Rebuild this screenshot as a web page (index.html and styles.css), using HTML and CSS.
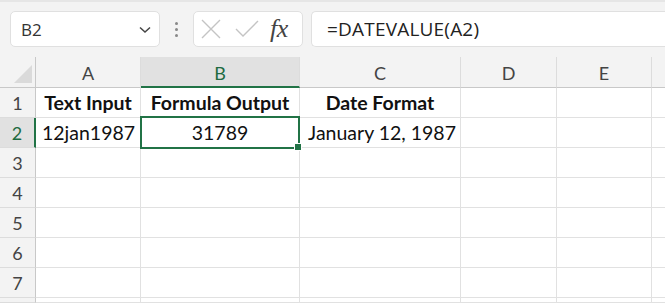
FILE: index.html
```html
<!DOCTYPE html>
<html lang="en">
<head>
  <meta charset="UTF-8">
  <title>DATEVALUE</title>
  <link rel="stylesheet" href="styles.css">
</head>
<body>
  <div class="toolbar">
    <div class="name-box">
      <span>B2</span>
      <svg class="chevron" width="12" height="8" viewBox="0 0 12 8"><path d="M1 1.5 L6 6 L11 1.5" fill="none" stroke="#444" stroke-width="1.5"/></svg>
    </div>
    <div class="dots"><i></i><i></i><i></i></div>
    <div class="fx-box">
      <svg width="22" height="22" viewBox="0 0 22 22"><path d="M2 2 L20 20 M20 2 L2 20" stroke="#c4c4c4" stroke-width="1.4" fill="none"/></svg>
      <svg width="24" height="22" viewBox="0 0 24 22"><path d="M1 11 L8 18 L23 3" stroke="#c4c4c4" stroke-width="1.4" fill="none"/></svg>
      <span class="fx">fx</span>
    </div>
    <div class="formula">=DATEVALUE(A2)</div>
  </div>

  <div class="sheet">
    <div class="hdr corner"><span class="tri"></span></div>
    <div class="hdr">A</div>
    <div class="hdr sel-col">B</div>
    <div class="hdr">C</div>
    <div class="hdr">D</div>
    <div class="hdr">E</div>
    <div class="hdr last"></div>

    <div class="rh">1</div>
    <div class="cell bold center">Text Input</div>
    <div class="cell bold center">Formula Output</div>
    <div class="cell bold center">Date Format</div>
    <div class="cell"></div><div class="cell"></div><div class="cell last"></div>

    <div class="rh sel-row">2</div>
    <div class="cell left">12jan1987</div>
    <div class="cell center active">31789<span class="handle"></span></div>
    <div class="cell right">January 12, 1987</div>
    <div class="cell"></div><div class="cell"></div><div class="cell last"></div>

    <div class="rh">3</div>
    <div class="cell"></div><div class="cell"></div><div class="cell"></div><div class="cell"></div><div class="cell"></div><div class="cell last"></div>
    <div class="rh">4</div>
    <div class="cell"></div><div class="cell"></div><div class="cell"></div><div class="cell"></div><div class="cell"></div><div class="cell last"></div>
    <div class="rh">5</div>
    <div class="cell"></div><div class="cell"></div><div class="cell"></div><div class="cell"></div><div class="cell"></div><div class="cell last"></div>
    <div class="rh">6</div>
    <div class="cell"></div><div class="cell"></div><div class="cell"></div><div class="cell"></div><div class="cell"></div><div class="cell last"></div>
    <div class="rh">7</div>
    <div class="cell"></div><div class="cell"></div><div class="cell"></div><div class="cell"></div><div class="cell"></div><div class="cell last"></div>
    <div class="rh"></div>
    <div class="cell"></div><div class="cell"></div><div class="cell"></div><div class="cell"></div><div class="cell"></div><div class="cell last"></div>
  </div>
</body>
</html>
```

FILE: styles.css
```css
* {
  box-sizing: border-box;
}

body {
  margin: 0;
  width: 665px;
  height: 303px;
  overflow: hidden;
  background: #f3f3f3;
  font-family: Lato, "Open Sans", sans-serif;
  color: #222;
  border-top: 2px solid #e6e6e6;
}

.toolbar {
  display: flex;
  align-items: center;
  height: 55px;
  padding: 8px 0 9px 10px;
}

.name-box {
  width: 150px;
  height: 36px;
  background: #fff;
  border: 1px solid #e0e0e0;
  border-radius: 5px;
  display: flex;
  align-items: center;
  justify-content: space-between;
  padding: 0 8px 0 10px;
  font-family: "Open Sans", sans-serif;
  font-size: 17px;
  color: #333;
}

.chevron {
  margin-top: 1px;
}

.dots {
  width: 33px;
  display: flex;
  flex-direction: column;
  align-items: center;
  gap: 3px;
}

.dots i {
  width: 3px;
  height: 3px;
  border-radius: 50%;
  background: #888;
}

.fx-box {
  width: 110px;
  height: 36px;
  background: #fff;
  border: 1px solid #e0e0e0;
  border-radius: 5px;
  display: flex;
  align-items: center;
  gap: 13px;
  padding-left: 6px;
}

.fx {
  font-family: "Liberation Serif", serif;
  font-style: italic;
  font-size: 26px;
  color: #444;
  margin-left: -2px;
  letter-spacing: -0.5px;
}

.formula {
  flex: 1;
  height: 36px;
  margin-left: 8px;
  background: #fff;
  border: 1px solid #e0e0e0;
  border-right: none;
  border-radius: 5px 0 0 5px;
  display: flex;
  align-items: center;
  padding-left: 15px;
  font-family: "Open Sans", sans-serif;
  font-size: 19px;
  letter-spacing: 0.2px;
  color: #222;
}

.sheet {
  display: grid;
  grid-template-columns: 36px 105px 159px 161px 96px 95px 1fr;
  grid-template-rows: 31px repeat(7, 30px) 5px;
  background: #fff;
}

.hdr {
  background: #f3f3f3;
  border-bottom: 1px solid #c8c8c8;
  border-right: 1px solid #dcdcdc;
  display: flex;
  align-items: center;
  justify-content: center;
  font-size: 18px;
  color: #444;
  padding-top: 2px;
}

.hdr.last {
  border-right: none;
}

.corner {
  position: relative;
  border-right: 1px solid #c8c8c8;
}

.tri {
  position: absolute;
  right: 3px;
  bottom: 4px;
  width: 0;
  height: 0;
  border-left: 18px solid transparent;
  border-bottom: 18px solid #dadada;
}

.sel-col {
  background: #e1e1e1;
  color: #1e6b41;
  border-bottom: 2px solid #217346;
}

.rh {
  background: #f3f3f3;
  border-right: 1px solid #c8c8c8;
  border-bottom: 1px solid #dcdcdc;
  display: flex;
  align-items: center;
  justify-content: center;
  font-size: 18px;
  color: #444;
}

.sel-row {
  background: #e1e1e1;
  color: #1e6b41;
  border-right: 2px solid #217346;
}

.cell {
  border-right: 1px solid #e1e1e1;
  border-bottom: 1px solid #e1e1e1;
  display: flex;
  align-items: center;
  padding: 0 4px;
  font-size: 19.5px;
  color: #111;
  white-space: nowrap;
}

.cell.last {
  border-right: none;
}

.bold {
  font-weight: 700;
}

.left {
  padding-left: 6px;
}

.center {
  justify-content: center;
}

.right {
  justify-content: flex-end;
}

.active {
  position: relative;
}

.active::before {
  content: "";
  position: absolute;
  left: -1px;
  top: -2px;
  right: -1px;
  bottom: -2px;
  border: 2px solid #217346;
}

.handle {
  position: absolute;
  right: -3px;
  bottom: -4px;
  width: 6px;
  height: 6px;
  background: #217346;
  border: 1px solid #fff;
  box-sizing: content-box;
}
```
